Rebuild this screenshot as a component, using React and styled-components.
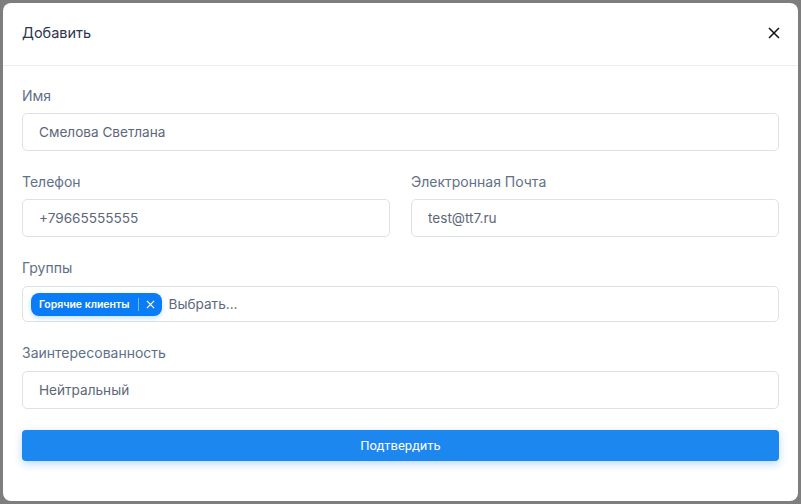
import React from 'react'
import styled, { createGlobalStyle } from 'styled-components'

const Global = createGlobalStyle`
  html, body {
    margin: 0;
    padding: 0;
    background: #7e7e7e;
    font-family: Inter, "Noto Sans", sans-serif;
  }
  * { box-sizing: border-box; }
`

const Backdrop = styled.div`
  width: 801px;
  height: 504px;
  padding: 3px;
  background: #7e7e7e;
  display: flex;
`

const ModalBox = styled.div`
  flex: 1;
  height: 498px;
  background: #fff;
  border-radius: 8px;
  display: flex;
  flex-direction: column;
  overflow: hidden;
`

const Header = styled.div`
  height: 63px;
  flex-shrink: 0;
  display: flex;
  align-items: center;
  justify-content: space-between;
  padding: 0 19px 3px 19px;
  border-bottom: 1px solid #eceef2;
`

const Title = styled.div`
  font-size: 14.5px;
  color: #2e3551;
`

const CloseBtn = styled.button`
  width: 20px;
  height: 20px;
  padding: 0;
  border: 0;
  background: none;
  display: flex;
  align-items: center;
  justify-content: center;
  cursor: pointer;
  margin-right: -5px;
`

const Body = styled.div`
  padding: 20px 19px 0 19px;
  display: flex;
  flex-direction: column;
  gap: 21px;
`

const Row = styled.div`
  display: grid;
  grid-template-columns: 1fr 1fr;
  gap: 21px;
`

const Field = styled.div`
  display: flex;
  flex-direction: column;
  gap: ${p => p.gap || 7}px;
`

const Label = styled.div`
  font-size: 14px;
  line-height: 20px;
  color: #627087;
`

const Input = styled.div`
  height: ${p => p.h || 38}px;
  border: 1px solid #dde1e8;
  border-radius: 5px;
  display: flex;
  align-items: center;
  gap: 7px;
  padding: 0 ${p => p.pad || 16}px;
  font-size: 13.6px;
  color: #5d677a;
`

const Chip = styled.div`
  height: 23px;
  border-radius: 8px;
  background: #0a7cf7;
  display: flex;
  align-items: center;
  padding: 0 7px 0 8px;
  color: #fff;
  font-size: 10.5px;
  font-weight: 600;
  box-shadow: 0 2px 5px rgba(10, 124, 247, 0.25);
`

const ChipSep = styled.span`
  width: 1px;
  height: 13px;
  background: rgba(255, 255, 255, 0.45);
  margin: 0 7px 0 8px;
`

const Placeholder = styled.span`
  color: #5d677a;
`

const Submit = styled.button`
  height: 31px;
  border: 0;
  border-radius: 4px;
  background: #1c87ef;
  color: #fff;
  font-family: Roboto, "Liberation Sans", sans-serif;
  font-size: 13px;
  font-weight: 400;
  box-shadow: 0 3px 8px rgba(28, 135, 239, 0.3);
  cursor: pointer;
`

export default function App() {
  return (
    <>
      <Global />
      <Backdrop>
        <ModalBox>
          <Header>
            <Title>Добавить</Title>
            <CloseBtn>
              <svg width="12" height="12" viewBox="0 0 12 12">
                <path d="M1 1L11 11M11 1L1 11" stroke="#111" strokeWidth="1.5" fill="none" />
              </svg>
            </CloseBtn>
          </Header>
          <Body>
            <Field>
              <Label>Имя</Label>
              <Input>Смелова Светлана</Input>
            </Field>
            <Row>
              <Field>
                <Label>Телефон</Label>
                <Input>+79665555555</Input>
              </Field>
              <Field>
                <Label>Электронная Почта</Label>
                <Input>test@tt7.ru</Input>
              </Field>
            </Row>
            <Field gap={8}>
              <Label>Группы</Label>
              <Input h={36} pad={8}>
                <Chip>
                  Горячие клиенты
                  <ChipSep />
                  <svg width="9" height="9" viewBox="0 0 10 10">
                    <path d="M1 1L9 9M9 1L1 9" stroke="#fff" strokeWidth="1.4" fill="none" />
                  </svg>
                </Chip>
                <Placeholder>Выбрать...</Placeholder>
              </Input>
            </Field>
            <Field gap={8}>
              <Label>Заинтересованность</Label>
              <Input>Нейтральный</Input>
            </Field>
            <Submit>Подтвердить</Submit>
          </Body>
        </ModalBox>
      </Backdrop>
    </>
  )
}
